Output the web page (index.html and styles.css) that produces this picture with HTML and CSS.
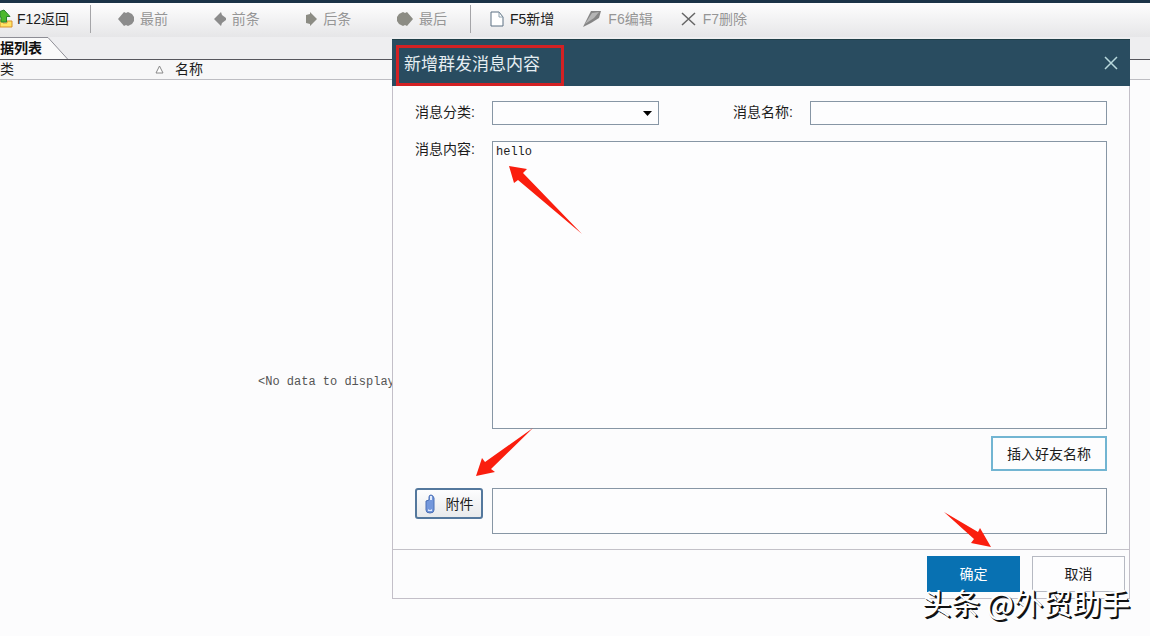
FILE: index.html
```html
<!DOCTYPE html>
<html lang="zh-CN">
<head>
<meta charset="utf-8">
<title>新增群发消息内容</title>
<link rel="stylesheet" href="styles.css">
</head>
<body>
<div class="toolbar">
  <button class="tool tool-back">
    <svg width="13" height="20" viewBox="0 0 13 20"><path d="M0 11h3v3h4v-2h5v6H0z" fill="#ffe566" stroke="#d9912b"/><path d="M0 2.500L4 1l6 6.500H6.500V13H1V8H0z" fill="#4db82e" stroke="#27842c"/></svg>
    F12返回
  </button>
  <span class="divider"></span>
  <div class="tool-group">
    <button class="tool" disabled><svg width="16" height="16" viewBox="0 0 16 16"><path d="M0 8l6-7 2 1 2-1 4 2 2 3v4l-2 3-4 2-2-1-2 1z" fill="#8c8c8c"/></svg>最前</button>
    <button class="tool" disabled><svg width="12" height="16" viewBox="0 0 12 16"><path d="M0 8l7-7 1 3 4 3v2l-4 3-1 3z" fill="#8c8c8c"/></svg>前条</button>
    <button class="tool" disabled><svg width="12" height="16" viewBox="0 0 12 16"><path d="M12 8L5 1v2L1 4v8l4 1v2z" fill="#8c8c84"/></svg>后条</button>
    <button class="tool" disabled><svg width="16" height="16" viewBox="0 0 16 16"><path d="M16 8l-6-7-2 1-2-1-4 2-2 3v4l2 3 4 2 2-1 2 1z" fill="#8c8c84"/></svg>最后</button>
  </div>
  <span class="divider"></span>
  <div class="tool-edit">
    <button class="tool"><svg width="14" height="16" viewBox="0 0 14 16"><path d="M1 1h8l4 5v9H1z" fill="#fff" stroke="#5c7183"/><path d="M9 1v5h4" fill="none" stroke="#8ea0ae"/></svg>F5新增</button>
    <button class="tool" disabled><svg width="20" height="18" viewBox="0 0 20 18"><path d="M1 17L9 1h10l-2 7-8 5z" fill="#858585"/><path d="M3 14L10 3l7-1-5 6z" fill="#b5b5b5"/></svg>F6编辑</button>
    <button class="tool" disabled><svg width="16" height="16" viewBox="0 0 16 16"><path d="M1 2l13 12M14 2L1 14" stroke="#666" stroke-width="1.500"/></svg>F7删除</button>
  </div>
</div>

<nav class="tabs">
  <a class="tab" href="#list">据列表</a>
  <svg class="tab-edge" width="24" height="22" viewBox="0 0 24 22"><path d="M0 0h2l20 22H0z" fill="#fafafa"/><path d="M0 .5h2l20 22" fill="none" stroke="#8d8d95"/></svg>
</nav>

<main id="list">
  <table class="grid">
    <colgroup><col class="col-kind"><col></colgroup>
    <thead>
      <tr>
        <th><span class="sorted">类<svg width="9" height="9" viewBox="0 0 9 9"><path d="M4.500 1L8 8H1z" fill="#fff" stroke="#888"/></svg></span></th>
        <th>名称</th>
      </tr>
    </thead>
  </table>
  <p class="empty">&lt;No data to display</p>
</main>

<section class="dialog" role="dialog" aria-labelledby="dialog-title">
  <header class="dialog-head">
    <h1 class="dialog-title" id="dialog-title">新增群发消息内容</h1>
    <button class="close" aria-label="关闭"><svg width="14" height="14" viewBox="0 0 14 14"><path d="M1 1l12 12M13 1L1 13" stroke="#b8d8dc" stroke-width="1.500"/></svg></button>
  </header>
  <form class="form">
    <label for="kind">消息分类:</label>
    <div class="select-wrap">
      <select class="field" id="kind"><option></option></select>
      <svg class="caret" width="9" height="5" viewBox="0 0 9 5"><path d="M0 0h9L4.500 5z"/></svg>
    </div>
    <label class="name-label" for="name">消息名称:</label>
    <input class="field" id="name" type="text">
    <label class="content-label" for="content">消息内容:</label>
    <textarea class="field content" id="content">hello</textarea>
    <button class="insert" type="button">插入好友名称</button>
    <button class="attach" type="button">
      <svg width="10" height="20" viewBox="0 0 10 20"><path d="M1 7l3-1V3q0-2 2-2t3 3v12q0 3-4 3t-4-3z" fill="#7397dc" stroke="#4a6fb4"/><path d="M5 2h2v4H5zM3 15q2 2 4 0v2H3z" fill="#e2ebfb"/></svg>
      附件
    </button>
    <textarea class="field files" aria-label="附件"></textarea>
  </form>
  <footer class="dialog-foot">
    <button class="action primary">确定</button>
    <button class="action">取消</button>
  </footer>
  <svg class="arrow arrow-text" width="74" height="69" viewBox="0 0 74 69"><path d="M0 0l18 3-4 4 59 61L9 14l-4 3z" fill="#fa1e0e"/></svg>
  <svg class="arrow arrow-attach" width="58" height="49" viewBox="0 0 58 49"><path d="M0 48l6-18 3 4L57 0 15 41l4 3z" fill="#fa1e0e"/></svg>
  <svg class="arrow arrow-ok" width="48" height="36" viewBox="0 0 48 36"><path d="M0 0l34 20 2-4 11 19-20-4 3-4z" fill="#fa1e0e"/></svg>
</section>
<div class="watermark">头条 @外贸助手</div>
</body>
</html>
```
FILE: styles.css
```css
* { box-sizing: border-box; }
body {
  margin: 0;
  min-height: 100vh;
  position: relative;
  overflow: hidden;
  background: #fcfcfd;
  color: #1c1c1c;
  font: 14px/20px "Liberation Sans", "Noto Sans CJK SC", sans-serif;
}
button, input, select, textarea { font: inherit; color: inherit; margin: 0; }
button { display: flex; align-items: center; justify-content: center; padding: 0; }
svg { display: block; flex: none; }

.toolbar {
  display: flex;
  align-items: center;
  height: 37px;
  padding-bottom: 2px;
  border-top: 3px solid #1c3448;
  background: linear-gradient(#fefefe, #e6e6e8);
}
.tool { gap: 6px; border: 0; background: none; white-space: nowrap; }
.tool:disabled { color: #969696; }
.tool-back { width: 90px; gap: 4px; justify-content: flex-start; }
.divider { width: 1px; height: 28px; background: #a5a5a8; }
.tool-group { display: flex; justify-content: space-between; width: 379px; padding: 0 23px 0 27px; }
.tool-edit { display: flex; gap: 28px; padding-left: 19px; }

.tabs {
  display: flex;
  height: 23px;
  background: #eeeef0;
  border-bottom: 1px solid #55555c;
}
.tab {
  width: 46px;
  background: #fafafa;
  border-top: 1px solid #8d8d95;
  color: #111;
  font-weight: bold;
  line-height: 21px;
  text-decoration: none;
}

.grid { width: 100%; table-layout: fixed; border-collapse: collapse; background: #f7f7f8; border-bottom: 1px solid #bdbdc2; }
.grid th { padding: 0; height: 19px; font-weight: normal; text-align: left; line-height: 19px; }
.col-kind { width: 175px; }
.sorted { display: flex; align-items: center; justify-content: space-between; padding-right: 11px; }
.empty { margin: 0; padding: 292px 0 0 258px; font: 12px/20px "Liberation Mono", monospace; color: #555; }

.dialog {
  position: absolute;
  top: 39px;
  left: 392px;
  right: 20px;
  background: #fcfcfd;
  border: 1px solid #c3bfc8;
  border-top: 0;
}
.dialog-head {
  display: flex;
  justify-content: space-between;
  align-items: flex-end;
  height: 47px;
  margin: 0 -1px;
  padding: 0 12px 0 4px;
  background: #294c60;
  border-top: 1px solid #203f48;
}
.dialog-title {
  margin: 0;
  padding: 0 21px 2px 5px;
  border: 3px solid #d32124;
  color: #e6eef2;
  font-size: 17px;
  font-weight: normal;
  line-height: 33px;
}
.close { height: 46px; border: 0; background: none; }

.form {
  display: grid;
  grid-template-columns: 77px 167px 74px 77px 1fr;
  padding: 15px 22px;
}
.form label { line-height: 22px; white-space: nowrap; }
.field {
  width: 100%;
  height: 24px;
  border: 1px solid #8796a5;
  border-radius: 0;
  background: #fdfdfe;
  outline: 0;
}
.select-wrap { position: relative; }
select.field { display: block; appearance: none; }
.caret { position: absolute; right: 7px; top: 10px; }
.name-label { grid-column: 4; }
.form .content-label { margin-top: 12px; height: 24px; line-height: 24px; }
.form textarea { display: block; grid-column: 2 / -1; resize: none; }
.form .content {
  height: 288px;
  margin-top: 16px;
  padding: 2px 3px;
  font: 12px/16px "Liberation Mono", monospace;
}
.insert {
  grid-column: 5;
  justify-self: end;
  width: 116px;
  height: 35px;
  margin: 7px 0 17px;
  border: 2px solid #72b5d2;
  background: #fdfdfe;
}
.attach {
  grid-column: 1;
  gap: 11px;
  width: 68px;
  height: 31px;
  border: 2px solid #54789d;
  border-radius: 3px;
  background: linear-gradient(#fdfdfe, #e8eaec);
}
.form .files { height: 46px; }

.dialog-foot {
  display: flex;
  justify-content: flex-end;
  gap: 12px;
  height: 49px;
  padding: 6px 4px;
  border-top: 1px solid #c3c1c8;
}
.action { width: 93px; height: 36px; border: 1px solid #b6b9c2; background: #fdfdfe; }
.primary { border-color: #0871b2; background: #0871b2; color: #fff; }

.arrow { position: absolute; }
.arrow-text { left: 116px; top: 127px; }
.arrow-attach { left: 83px; top: 389px; }
.arrow-ok { right: 137px; top: 473px; }

.watermark {
  position: absolute;
  right: 20px;
  bottom: 14px;
  color: #fff;
  font: 29px/40px "Noto Sans CJK SC", sans-serif;
  text-shadow: 1px 1px 0 #111, 2px 2px 0 #111;
}
```
